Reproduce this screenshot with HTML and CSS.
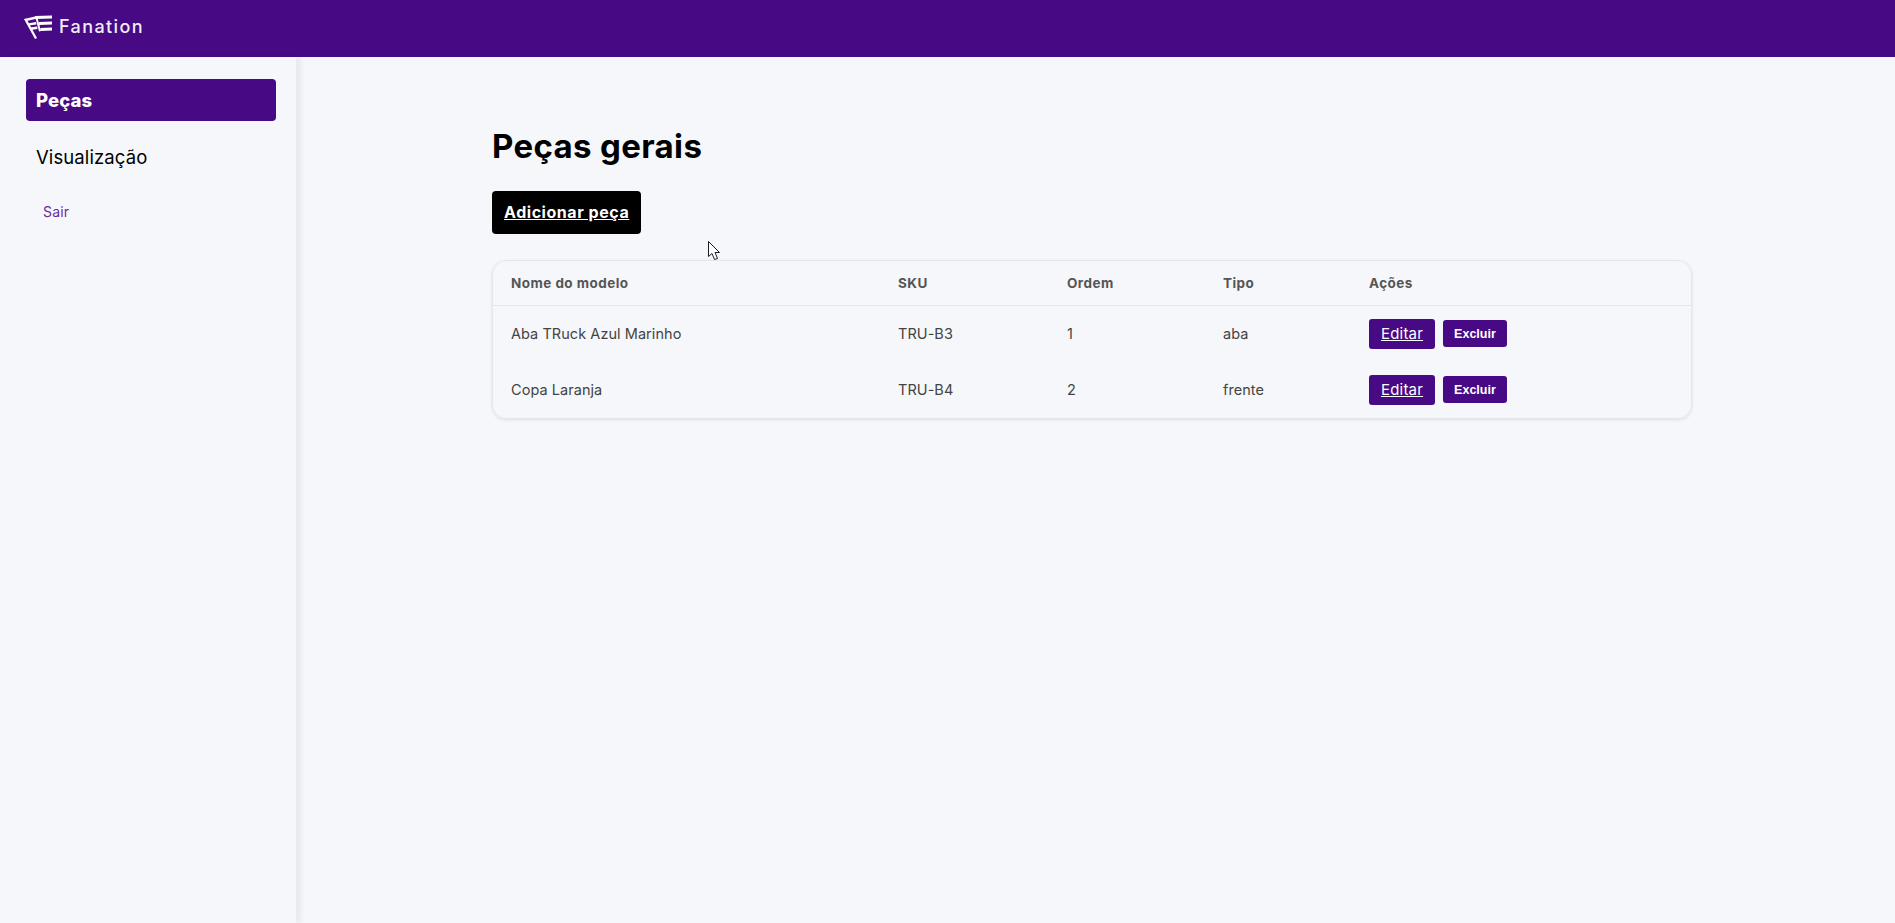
FILE: index.html
```html
<!DOCTYPE html>
<html>
<head>
    <title>Fanation</title>
    <link rel="stylesheet" href="styles.css">
</head>
<body>
    <header class="topbar">
        <svg class="logo" viewBox="0 0 29 24" width="29" height="24">
            <path d="M11 1 L28 0.5 L28 3.5 L11 4 Z" fill="#fff"/>
            <path d="M15 7 L28 6.5 L28 9.5 L15 10 Z" fill="#fff"/>
            <path d="M16.5 13 L28 12.5 L28 15.5 L16.5 16 Z" fill="#fff"/>
            <path d="M11 1 L13 1 L17 16 L15 16.5 Z" fill="#fff"/>
            <path d="M0 4 L11 1.5 L11.5 4 L2.5 6 Z" fill="#fff"/>
            <path d="M3.5 8.5 L12 7 L12.5 9.5 L4.5 10.5 Z" fill="#fff"/>
            <path d="M5.5 12.5 L13 11.5 L13.5 14 L7 15 Z" fill="#fff"/>
            <path d="M0 4 L2.5 4 L13 23 L11 24 Z" fill="#fff"/>
        </svg>
        <span class="brand">Fanation</span>
    </header>

    <div class="layout">
        <nav class="sidebar">
            <a class="nav-item active" href="#">Peças</a>
            <a class="nav-item" href="#">Visualização</a>
            <a class="logout" href="#">Sair</a>
        </nav>

        <main class="content">
            <h1>Peças gerais</h1>
            <a class="add-btn" href="#">Adicionar peça</a>

            <div class="table-card">
                <table>
                    <tr>
                        <th class="col-name">Nome do modelo</th>
                        <th class="col-sku">SKU</th>
                        <th class="col-order">Ordem</th>
                        <th class="col-type">Tipo</th>
                        <th>Ações</th>
                    </tr>
                    <tr>
                        <td>Aba TRuck Azul Marinho</td>
                        <td>TRU-B3</td>
                        <td>1</td>
                        <td>aba</td>
                        <td class="actions"><a class="edit-btn" href="#">Editar</a><button class="delete-btn">Excluir</button></td>
                    </tr>
                    <tr>
                        <td>Copa Laranja</td>
                        <td>TRU-B4</td>
                        <td>2</td>
                        <td>frente</td>
                        <td class="actions"><a class="edit-btn" href="#">Editar</a><button class="delete-btn">Excluir</button></td>
                    </tr>
                </table>
            </div>
        </main>
    </div>

    <svg class="cursor" viewBox="0 0 13 20" width="13" height="20">
        <path d="M0.5 0.5 L0.5 15.5 L4 12.5 L6.5 18.5 L9.5 17.5 L7 11.5 L11.5 11.5 Z" fill="#fff" stroke="#1a1a2a" stroke-width="1"/>
    </svg>
</body>
</html>
```

FILE: styles.css
```css
* {
    box-sizing: border-box;
}

html, body {
    height: 100%;
}

body {
    margin: 0;
    font-family: "Inter", "Open Sans", sans-serif;
    background: #f5f7fb;
    color: #000;
    overflow: hidden;
}

.topbar {
    height: 57px;
    background: #470a84;
    display: flex;
    align-items: center;
    gap: 6px;
    padding: 0 0 4px 24px;
}

.brand {
    color: #f1ecf6;
    font-size: 18px;
    font-weight: 500;
    letter-spacing: 1.4px;
}

.layout {
    display: flex;
    height: 866px;
}

.sidebar {
    width: 296px;
    flex-shrink: 0;
    padding: 22px 20px 0 26px;
    box-shadow: 5px 0 5px rgba(0,0,0,0.06);
}

.nav-item {
    display: block;
    height: 42px;
    line-height: 42px;
    padding-left: 10px;
    font-size: 18.5px;
    letter-spacing: 0.1px;
    color: #000;
    text-decoration: none;
    border-radius: 4px;
    margin-bottom: 15px;
}

.nav-item.active {
    background: #470a84;
    color: #fff;
    font-weight: 800;
}

.logout {
    display: block;
    margin: 25px 0 0 17px;
    font-size: 14px;
    letter-spacing: 0.2px;
    color: #6a2c9c;
    text-decoration: none;
}

.content {
    margin-left: 196px;
    width: 1200px;
    padding-top: 68px;
}

h1 {
    margin: 0 0 24px;
    font-size: 33px;
    line-height: 42px;
    font-weight: 700;
    letter-spacing: 0.35px;
}

.add-btn {
    display: inline-block;
    height: 43px;
    line-height: 43px;
    padding: 0 12px;
    background: #000;
    color: #fff;
    font-size: 16px;
    font-weight: 700;
    letter-spacing: 0.55px;
    border-radius: 4px;
}

.table-card {
    margin-top: 26px;
    border: 1px solid #e4e6eb;
    border-radius: 14px;
    box-shadow: 0 1px 3px rgba(0,0,0,0.1);
    overflow: hidden;
}

table {
    width: 100%;
    border-collapse: collapse;
    font-size: 14.5px;
    letter-spacing: 0.05px;
}

th, td {
    text-align: left;
    padding: 0 18px;
}

th {
    height: 44px;
    font-size: 13.5px;
    font-weight: 700;
    letter-spacing: 0.45px;
    color: #555;
    border-bottom: 1px solid #e4e6eb;
}

td {
    height: 56px;
    color: #444;
}

.col-name {
    width: 387px;
}

.col-sku {
    width: 169px;
}

.col-order {
    width: 156px;
}

.col-type {
    width: 146px;
}

.actions {
    display: flex;
    align-items: center;
    gap: 8px;
}

.edit-btn {
    display: inline-block;
    height: 30px;
    line-height: 30px;
    padding: 0 12px;
    background: #470a84;
    color: #fff;
    font-size: 15px;
    letter-spacing: 0.2px;
    border-radius: 3px;
}

.delete-btn {
    height: 27px;
    padding: 0 11px;
    background: #470a84;
    color: #fff;
    border: none;
    border-radius: 3px;
    font-family: "Liberation Sans", Arial, sans-serif;
    font-size: 12.5px;
    font-weight: 700;
}

.cursor {
    position: absolute;
    left: 708px;
    top: 241px;
}
```
